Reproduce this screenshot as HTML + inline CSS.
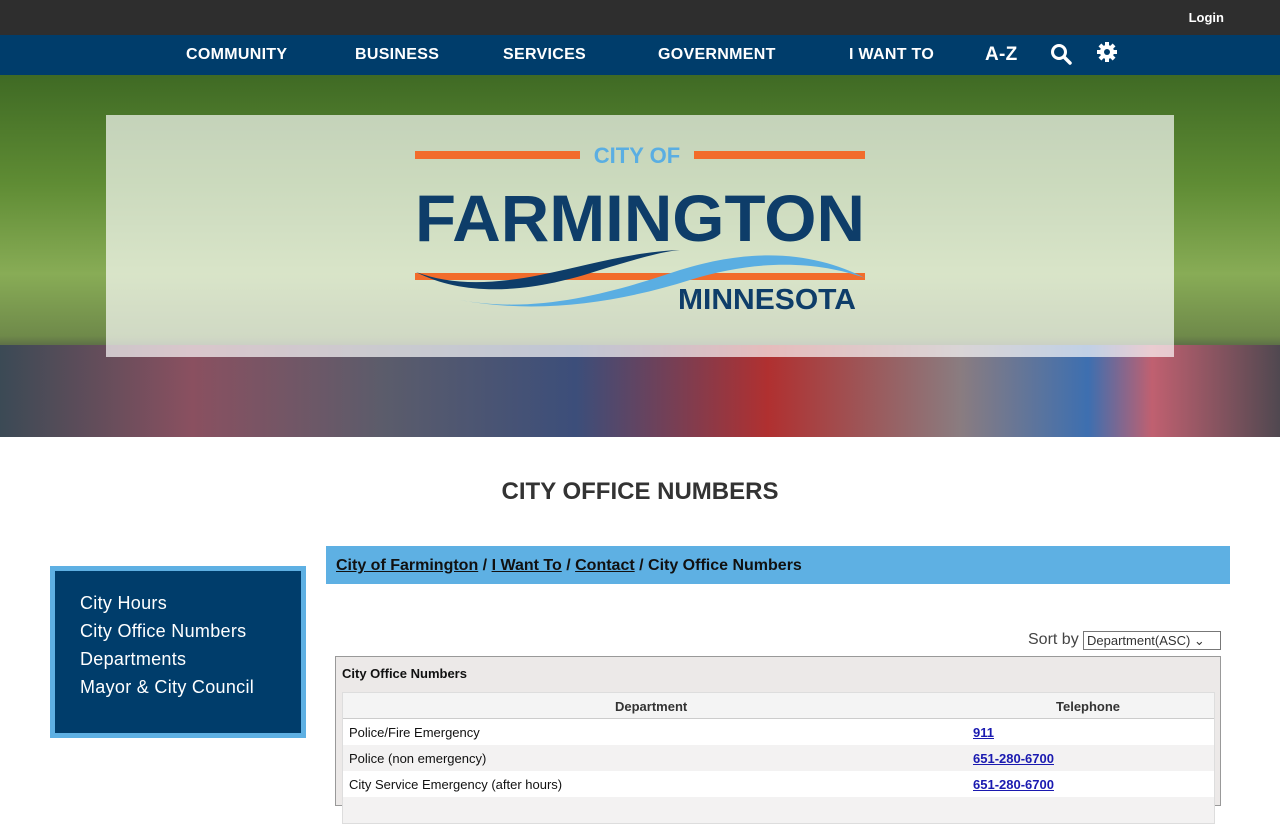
<!DOCTYPE html>
<html><head><style>
*{margin:0;padding:0;box-sizing:border-box}
body{width:1280px;height:800px;overflow:hidden;background:#fff;font-family:"Liberation Sans",sans-serif;position:relative}
.top{position:absolute;top:0;left:0;width:1280px;height:35px;background:#2e2e2e}
.top span{position:absolute;right:56px;top:10px;color:#fff;font-size:13px;font-weight:bold}
.nav{position:absolute;top:35px;left:0;width:1280px;height:40px;background:#003d6b;color:#fff;font-weight:bold;font-size:16px}
.nav span{position:absolute;top:11px;letter-spacing:.3px}
.hero{position:absolute;top:75px;left:0;width:1280px;height:362px;overflow:hidden;
background:linear-gradient(180deg,#3f6a24 0%,#5f8c34 30%,#88ac56 55%,#6f8a4a 72%,#3a3a40 80%,#5a4a50 100%)}
.crowd{position:absolute;left:0;top:270px;width:1280px;height:92px;background:linear-gradient(90deg,#3b4a55,#8a5060 15%,#5b5c6b 30%,#3c4e7a 45%,#b03030 60%,#8a7c80 75%,#3d6fb0 85%,#c06070 90%,#504850)}
.box{position:absolute;left:106px;top:40px;width:1068px;height:242px;background:rgba(255,255,255,.68)}
h1{position:absolute;top:478px;left:0;width:1280px;text-align:center;font-size:24px;color:#333;font-weight:bold}
.side{position:absolute;left:50px;top:566px;width:256px;height:172px;background:#003d6b;border:5px solid #5eb0e3;padding:18px 0 0 25px}
.side div{color:#fff;font-size:18px;line-height:28px;letter-spacing:.3px}
.crumb{position:absolute;left:326px;top:546px;width:904px;height:38px;background:#5eb0e3;padding:11px 10px 0;font-size:16px;font-weight:bold;color:#111}
.crumb u{color:#111;text-decoration:underline}
.sort{position:absolute;left:1028px;top:631px;font-size:16px;color:#444}
.sel{position:absolute;left:1083px;top:631px;width:138px;height:19px;border:1px solid #777;font-size:13px;color:#333;padding:1px 3px;background:#fff}
.tbl{position:absolute;left:335px;top:656px;width:886px;height:150px;background:#ece9e8;border:1px solid #999}
.tbl .t{position:absolute;left:6px;top:9px;font-size:13px;font-weight:bold;color:#111}
.in{position:absolute;left:6px;top:35px;width:873px;background:#fff;border:1px solid #ddd}
.row{height:26px;font-size:13px;position:relative;color:#111}
.row span{position:absolute;top:6px}
.hd{background:#f4f4f4;border-bottom:1px solid #ccc;font-weight:bold;color:#333}
.alt{background:#f3f2f2}
a{color:#1a1ab0;font-weight:bold;text-decoration:underline}
</style></head><body>
<div class="top"><span>Login</span></div>
<div class="nav">
<span style="left:186px">COMMUNITY</span><span style="left:355px">BUSINESS</span><span style="left:503px">SERVICES</span><span style="left:658px">GOVERNMENT</span><span style="left:849px">I WANT TO</span><span style="left:985px;font-size:19px;top:9px">A-Z</span>
<svg style="position:absolute;left:1050px;top:8px" width="22" height="22" viewBox="0 0 22 22"><circle cx="9" cy="9" r="6.5" fill="none" stroke="#fff" stroke-width="3"/><path d="M14 14l6 6" stroke="#fff" stroke-width="3.5" stroke-linecap="round"/></svg>
<svg style="position:absolute;left:1097px;top:7px" width="20" height="20" viewBox="0 0 20 20"><g fill="#fff"><circle cx="10" cy="10" r="7"/><rect x="8" y="0" width="4" height="20"/><rect x="0" y="8" width="20" height="4"/><rect x="8" y="0" width="4" height="20" transform="rotate(45 10 10)"/><rect x="8" y="0" width="4" height="20" transform="rotate(-45 10 10)"/></g><circle cx="10" cy="10" r="3" fill="#003d6b"/></svg>
</div>
<div class="hero"><div class="crowd"></div>
<div class="box">
<svg width="1068" height="242" viewBox="106 115 1068 242">
<rect x="415" y="151" width="165" height="8" fill="#f26c2b"/><rect x="694" y="151" width="171" height="8" fill="#f26c2b"/>
<text x="637" y="163" font-family="Liberation Sans" font-size="22" font-weight="bold" fill="#5aaee2" text-anchor="middle">CITY OF</text>
<text x="640" y="241" font-family="Liberation Sans" font-size="66" font-weight="bold" fill="#0e3d69" text-anchor="middle" textLength="450" lengthAdjust="spacingAndGlyphs">FARMINGTON</text>
<rect x="415" y="273" width="450" height="7" fill="#f26c2b"/>
<path d="M416 272 C470 300 540 290 600 270 C640 258 660 252 680 250 C630 252 590 265 540 275 C490 285 450 285 416 272Z" fill="#0e3d69"/>
<path d="M460 300 C540 315 620 290 680 270 C760 245 820 255 865 278 C820 262 760 258 690 280 C620 302 540 315 460 300Z" fill="#5aaee2"/>
<text x="767" y="309" font-family="Liberation Sans" font-size="29" font-weight="bold" fill="#0e3d69" text-anchor="middle" textLength="178" lengthAdjust="spacingAndGlyphs">MINNESOTA</text>
</svg></div></div>
<h1>CITY OFFICE NUMBERS</h1>
<div class="side"><div>City Hours</div><div>City Office Numbers</div><div>Departments</div><div>Mayor &amp; City Council</div></div>
<div class="crumb"><u>City of Farmington</u> / <u>I Want To</u> / <u>Contact</u> / City Office Numbers</div>
<div class="sort">Sort by</div><div class="sel">Department(ASC) &#8964;</div>
<div class="tbl"><div class="t">City Office Numbers</div>
<div class="in">
<div class="row hd"><span style="left:272px">Department</span><span style="left:713px">Telephone</span></div>
<div class="row"><span style="left:6px">Police/Fire Emergency</span><span style="left:630px"><a>911</a></span></div>
<div class="row alt"><span style="left:6px">Police (non emergency)</span><span style="left:630px"><a>651-280-6700</a></span></div>
<div class="row"><span style="left:6px">City Service Emergency (after hours)</span><span style="left:630px"><a>651-280-6700</a></span></div>
<div class="row alt"></div>
</div></div>
</body></html>
